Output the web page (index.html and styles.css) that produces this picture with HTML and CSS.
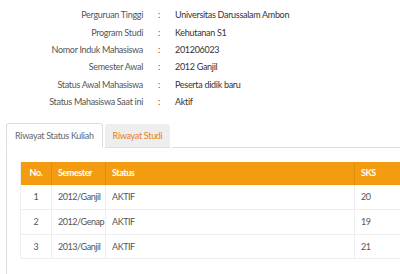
FILE: index.html
```html
<!DOCTYPE html>
<html lang="en">
<head>
  <meta charset="UTF-8">
  <title>Riwayat Studi</title>
  <link rel="stylesheet" href="styles.css">
</head>
<body>
  <!-- Biodata mahasiswa -->
  <div class="info">
    <div class="info-label">Perguruan Tinggi</div><div class="info-sep">:</div><div class="info-value">Universitas Darussalam Ambon</div>
    <div class="info-label">Program Studi</div><div class="info-sep">:</div><div class="info-value">Kehutanan S1</div>
    <div class="info-label">Nomor Induk Mahasiswa</div><div class="info-sep">:</div><div class="info-value">201206023</div>
    <div class="info-label">Semester Awal</div><div class="info-sep">:</div><div class="info-value">2012 Ganjil</div>
    <div class="info-label">Status Awal Mahasiswa</div><div class="info-sep">:</div><div class="info-value">Peserta didik baru</div>
    <div class="info-label">Status Mahasiswa Saat ini</div><div class="info-sep">:</div><div class="info-value">Aktif</div>
  </div>

  <!-- Tabs -->
  <div class="tabs">
    <div class="tab active">Riwayat Status Kuliah</div>
    <div class="tab">Riwayat Studi</div>
    <div class="tab-fill"></div>
  </div>

  <div class="tab-panel">
    <table class="data-table">
      <colgroup>
        <col class="w-no">
        <col class="w-sem">
        <col class="w-status">
        <col class="w-sks">
      </colgroup>
      <thead>
        <tr>
          <th class="col-no">No.</th>
          <th>Semester</th>
          <th>Status</th>
          <th>SKS</th>
        </tr>
      </thead>
      <tbody>
        <tr><td class="col-no">1</td><td>2012/Ganjil</td><td>AKTIF</td><td>20</td></tr>
        <tr><td class="col-no">2</td><td>2012/Genap</td><td>AKTIF</td><td>19</td></tr>
        <tr><td class="col-no">3</td><td>2013/Ganjil</td><td>AKTIF</td><td>21</td></tr>
      </tbody>
    </table>
  </div>
</body>
</html>
```

FILE: styles.css
```css
/* General body styling */
body {
  margin: 0;
  background-color: white;
  font-family: 'Lato', sans-serif;
  font-size: 9px;
  letter-spacing: -0.3px;
  color: #333;
  overflow: hidden;
  width: 400px;
  height: 274px;
}

/* Biodata grid */
.info {
  display: grid;
  grid-template-columns: 143px 32px 1fr;
  grid-auto-rows: 17.4px;
  align-items: center;
  padding-top: 6px;
}

.info-label {
  text-align: right;
  color: #555;
}

.info-sep {
  text-align: center;
  color: #555;
}

.info-value {
  color: #333;
}

/* Tabs */
.tabs {
  display: flex;
  align-items: flex-end;
  margin-top: 12.6px;
  padding-left: 6px;
  height: 25px;
}

.tab {
  height: 24px;
  line-height: 24px;
  padding: 0 8px;
  margin-right: 2px;
  background-color: #eee;
  color: #e67e22;
  border-bottom: 1px solid #ddd;
  border-radius: 3px 3px 0 0;
  box-sizing: border-box;
}

.tab.active {
  height: 25px;
  background-color: white;
  color: #666;
  border: 1px solid #ddd;
  border-bottom-color: white;
  line-height: 23px;
  padding: 0 8px;
}

.tab-fill {
  flex: 1;
  border-bottom: 1px solid #ddd;
}

/* Panel under tabs */
.tab-panel {
  border-left: 1px solid #ddd;
  margin-left: 6px;
  padding: 14px 0 20px 13px;
  width: 460px;
}

/* Table */
.data-table {
  border-collapse: separate;
  border-spacing: 0;
  table-layout: fixed;
  width: 420px;
  border: 1px solid #eee;
  border-top: none;
  border-radius: 0 0 3px 3px;
  color: #555;
  letter-spacing: -0.45px;
}

.w-no { width: 31px; }
.w-sem { width: 54px; }
.w-status { width: 249px; }

.data-table th {
  background-color: #f39c12;
  color: white;
  font-weight: bold;
  text-align: left;
  height: 23px;
  line-height: 12px;
  padding: 0 0 0 6px;
  border-right: 1px solid #e08e0b;
  box-sizing: border-box;
  white-space: nowrap;
}

.data-table td {
  height: 24.5px;
  line-height: 12px;
  padding: 0 0 0 6px;
  border-right: 1px solid #eee;
  border-top: 1px solid #eee;
  box-sizing: border-box;
  white-space: nowrap;
}

.data-table tbody tr:first-child td {
  border-top: none;
}

.data-table .col-no {
  text-align: center;
  padding: 0;
}
```
